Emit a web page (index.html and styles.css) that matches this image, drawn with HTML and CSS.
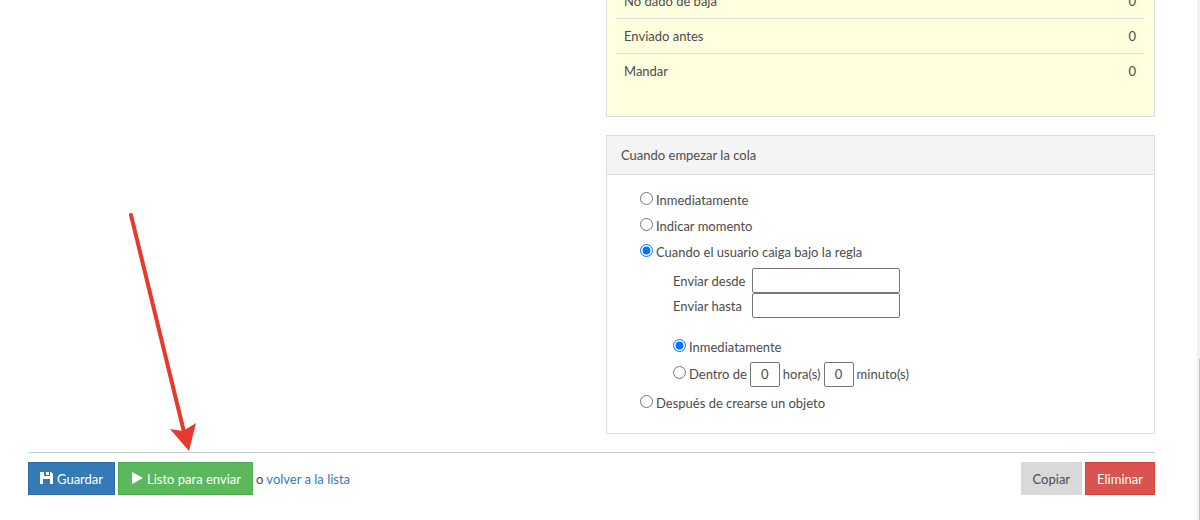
FILE: index.html
```html
<!DOCTYPE html>
<html lang="es">
  <head>
    <meta charset="UTF-8" />
    <meta name="viewport" content="width=device-width, initial-scale=1.0" />
    <title>Envío</title>
    <link rel="stylesheet" href="styles.css">
  </head>
  <body>
    <form class="page">
      <div class="columns">
        <div class="column"></div>
        <div class="column">
          <div class="panel panel-summary">
            <table class="summary">
              <tr>
                <th scope="row">No dado de baja</th>
                <td>0</td>
              </tr>
              <tr>
                <th scope="row">Enviado antes</th>
                <td>0</td>
              </tr>
              <tr>
                <th scope="row">Mandar</th>
                <td>0</td>
              </tr>
            </table>
          </div>

          <div class="panel">
            <div class="panel-heading">Cuando empezar la cola</div>
            <div class="panel-body">
              <div class="option">
                <input type="radio" name="start" id="startNow" />
                <label for="startNow">Inmediatamente</label>
              </div>
              <div class="option">
                <input type="radio" name="start" id="startTime" />
                <label for="startTime">Indicar momento</label>
              </div>
              <div class="option">
                <input type="radio" name="start" id="startRule" checked />
                <label for="startRule">Cuando el usuario caiga bajo la regla</label>
              </div>
              <div class="nested">
                <div class="range">
                  <label for="sendFrom">Enviar desde</label>
                  <input type="text" id="sendFrom" />
                  <label for="sendTo">Enviar hasta</label>
                  <input type="text" id="sendTo" />
                </div>
                <div class="option">
                  <input type="radio" name="delay" id="delayNone" checked />
                  <label for="delayNone">Inmediatamente</label>
                </div>
                <div class="option option-delay">
                  <input type="radio" name="delay" id="delayIn" />
                  <label for="delayIn">Dentro de</label>
                  <input type="text" class="number" id="hours" value="0" />
                  <label for="hours">hora(s)</label>
                  <input type="text" class="number" id="minutes" value="0" />
                  <label for="minutes">minuto(s)</label>
                </div>
              </div>
              <div class="option">
                <input type="radio" name="start" id="startObject" />
                <label for="startObject">Después de crearse un objeto</label>
              </div>
            </div>
          </div>
        </div>
      </div>

      <div class="actions">
        <button type="button" class="btn btn-primary">
          <svg class="icon" width="13" height="12" viewBox="0 0 13 12" aria-hidden="true">
            <path fill="#fff" fill-rule="evenodd" d="M0 0H4V4H10V0H11L13 2V12H10V7H3V12H0ZM6 0H9V3H6Z" />
          </svg>
          Guardar
        </button>
        <button type="button" class="btn btn-success">
          <svg class="icon" width="11" height="12" viewBox="0 0 11 12" aria-hidden="true">
            <path fill="#fff" d="M0 0L11 6L0 12Z" />
          </svg>
          Listo para enviar
        </button>
        <span class="back">o <a href="#">volver a la lista</a></span>
        <button type="button" class="btn btn-default">Copiar</button>
        <button type="button" class="btn btn-danger">Eliminar</button>
      </div>
    </form>

    <svg class="arrow" width="70" height="240" viewBox="0 0 70 240" aria-hidden="true">
      <path d="M6 5L59 222" stroke="#e63a2e" stroke-width="4" stroke-linecap="round" />
      <path d="M45 219L58 221L71 213L64 241Z" fill="#e63a2e" />
    </svg>
    <div class="scrollbar"><div class="scrollbar-thumb"></div></div>
  </body>
</html>
```
FILE: styles.css
```css
* {
  box-sizing: border-box;
}
body {
  margin: 0;
  overflow: hidden;
  font-family: Lato, "Noto Sans", sans-serif;
  font-size: 13px;
  line-height: 18px;
  color: #4c4c4c;
  background: #fff;
}
a {
  color: #337ab7;
  text-decoration: none;
}

/* the page is scrolled down, the first row is cut by the window */
.page {
  margin-top: -17px;
  padding: 0 45px 24px 28px;
}
.columns {
  display: grid;
  grid-template-columns: 1fr 1fr;
  gap: 29px;
}

.panel {
  margin-bottom: 18px;
  border: 1px solid #ddd;
}
.panel-summary {
  padding: 0 10px 28px 9px;
  border-top: none;
  background: #ffffdf;
}
.panel-heading {
  padding: 10px 14px;
  border-bottom: 1px solid #ddd;
  background: #f4f4f4;
}
.panel-body {
  padding: 12px 33px 17px;
}

.summary {
  width: 100%;
  border-collapse: collapse;
}
.summary th,
.summary td {
  padding: 8px;
  border-top: 1px solid #ddd;
  font-weight: normal;
  text-align: left;
}
.summary td {
  text-align: right;
}

.option {
  display: flex;
  align-items: center;
  height: 26px;
}
.option input[type="radio"] {
  width: 13px;
  height: 13px;
  margin: 0 3px 3px 0;
}
.nested {
  padding: 3px 0 2px 33px;
}
.range {
  display: grid;
  grid-template-columns: 79px 148px;
  align-items: center;
  margin-bottom: 16px;
}
input[type="text"] {
  height: 25px;
  padding: 0 8px;
  border: 1px solid #767676;
  border-radius: 2px;
  font: inherit;
  color: inherit;
}
.option-delay {
  height: 28px;
}
.option-delay .number {
  width: 30px;
  margin: 0 3px;
  padding: 0;
  text-align: center;
}

.actions {
  display: flex;
  align-items: center;
  gap: 3px;
  padding-top: 9px;
  border-top: 1px solid #ccc;
}
.btn {
  display: flex;
  align-items: center;
  gap: 4px;
  height: 33px;
  padding: 0 11px;
  border: 1px solid;
  font: inherit;
  color: #fff;
}
.btn .icon {
  margin-bottom: 2px;
}
.btn-primary {
  border-color: #2e6da4;
  background: #337ab7;
}
.btn-success {
  padding-left: 13px;
  border-color: #4cae4c;
  background: #5cb85c;
}
.btn-default {
  border-color: #d9d9d9;
  background: #d9d9d9;
  color: #4c4c4c;
}
.btn-danger {
  border-color: #d43f3a;
  background: #d9534f;
}
.back {
  margin-right: auto;
}

.arrow {
  position: absolute;
  top: 210px;
  left: 125px;
  overflow: visible;
}
.scrollbar {
  position: fixed;
  top: 0;
  right: 0;
  bottom: 0;
  width: 3px;
  padding-left: 2px;
  background: #f1f1f1;
}
.scrollbar-thumb {
  height: 31%;
  margin-top: 359px;
  background: #c1c1c1;
}
```
